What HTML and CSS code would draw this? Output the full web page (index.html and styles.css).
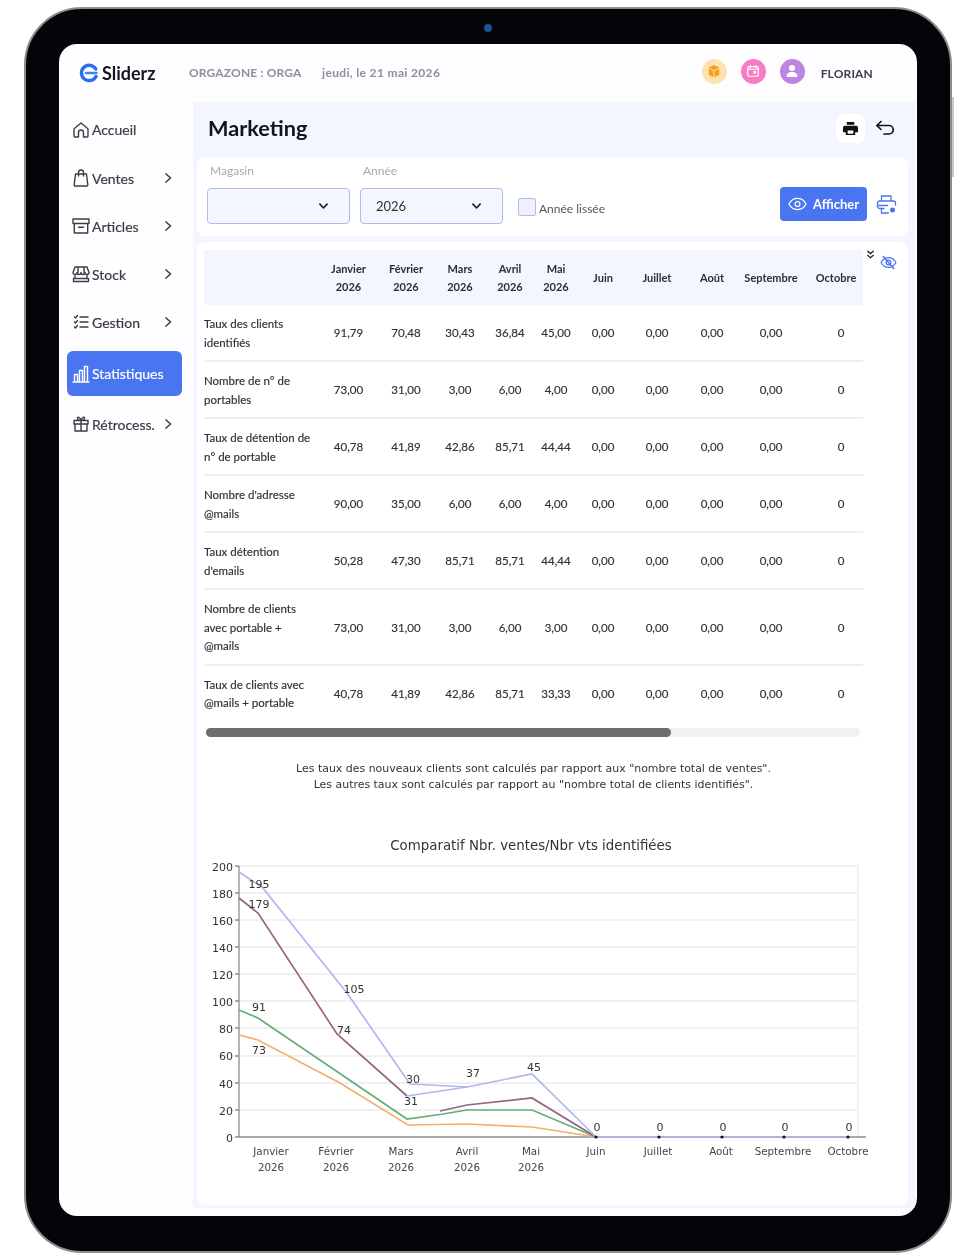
FILE: index.html
```html
<!DOCTYPE html>
<html lang="fr">
<head>
<meta charset="utf-8">
<title>Sliderz - Marketing</title>
<link rel="stylesheet" href="styles.css">
</head>
<body>
<div class="tablet">
  <span class="camera"></span>
  <div class="screen">
    <header class="topbar">
      <div class="brand">
        <svg class="logo" viewBox="0 0 20 20" width="20" height="20"><path d="M16.800 6A7.700 7.700 0 1 0 17 13.500" fill="none" stroke="#2a6df0" stroke-width="3.400" stroke-linecap="round"/><path d="M7 10h10.500" stroke="#2a8cf0" stroke-width="2.400" stroke-linecap="round"/></svg>
        <span class="brand-name">Sliderz</span>
      </div>
      <span class="org">ORGAZONE : ORGA</span>
      <span class="date">jeudi, le 21 mai 2026</span>
      <div class="top-icons">
        <span class="round round-orange"><svg viewBox="0 0 16 16" width="14" height="14"><path d="M8 1l6 3-6 3-6-3zM2 5.200l5.400 2.700V15L2 12.200zM14 5.200L8.600 7.900V15l5.400-2.800z" fill="#f5a016"/></svg></span>
        <span class="round round-pink"><svg viewBox="0 0 16 16" width="14" height="14"><rect x="2" y="3" width="12" height="11" rx="1.500" fill="none" stroke="#fff" stroke-width="1.400"/><path d="M2 6h12M5 1.500v3M11 1.500v3" stroke="#fff" stroke-width="1.400"/><rect x="8.500" y="8" width="3" height="3" fill="#fff"/></svg></span>
        <span class="round round-purple"><svg viewBox="0 0 16 16" width="16" height="16"><circle cx="8" cy="5" r="3" fill="#fff"/><path d="M2.500 14c0-3.400 2.200-5 5.500-5s5.500 1.600 5.500 5z" fill="#fff"/></svg></span>
        <span class="user">FLORIAN</span>
      </div>
    </header>
    <div class="body">
      <nav class="sidebar">
        <a class="nav-item nav-first"><svg class="nav-icon" viewBox="0 0 18 18"><path d="M9 2 2.600 7.300a1.500 1.500 0 0 0-.6 1.200V15a1 1 0 0 0 1 1h3.500v-4.500a2.500 2.500 0 0 1 5 0V16H15a1 1 0 0 0 1-1V8.500a1.500 1.500 0 0 0-.6-1.200z"/></svg><span class="nav-label">Accueil</span></a>
        <a class="nav-item"><svg class="nav-icon" viewBox="0 0 18 18"><path d="M3.500 5h11l1.300 11a1 1 0 0 1-1 1H3.200a1 1 0 0 1-1-1zM6.500 7V3.500a2.500 2.500 0 0 1 5 0V7"/></svg><span class="nav-label">Ventes</span><svg class="chev" viewBox="0 0 8 12"><path d="M1.500 1.500 6.500 6l-5 4.500"/></svg></a>
        <a class="nav-item"><svg class="nav-icon" viewBox="0 0 18 18"><path d="M1 2h16v4.500H1zM2.300 6.500V16h13.400V6.500M6.500 10.300h5"/></svg><span class="nav-label">Articles</span><svg class="chev" viewBox="0 0 8 12"><path d="M1.500 1.500 6.500 6l-5 4.500"/></svg></a>
        <a class="nav-item"><svg class="nav-icon" viewBox="0 0 18 18"><path d="M3 2h12l2 5.500a2 2 0 0 1-4 0 2 2 0 0 1-4 0 2 2 0 0 1-4 0 2 2 0 0 1-4 0zM3 9.500v4h12v-4M1.500 13.500h15v3h-15zM6 2.500v5M12 2.500v5"/></svg><span class="nav-label">Stock</span><svg class="chev" viewBox="0 0 8 12"><path d="M1.500 1.500 6.500 6l-5 4.500"/></svg></a>
        <a class="nav-item"><svg class="nav-icon" viewBox="0 0 18 18"><path d="M8 4h8M8 9h8M8 14h8M2.500 4l1 1 2-2.500M2.500 9l1 1 2-2.500M2.500 14l1 1 2-2.500"/></svg><span class="nav-label">Gestion</span><svg class="chev" viewBox="0 0 8 12"><path d="M1.500 1.500 6.500 6l-5 4.500"/></svg></a>
        <a class="nav-item nav-active"><svg class="nav-icon" viewBox="0 0 18 18"><path d="M1 17h16M2.500 16.500V9.500h3v7M7.500 16.500V5.500h3v11M12.500 16.500V1.500h3v15"/></svg><span class="nav-label">Statistiques</span></a>
        <a class="nav-item"><svg class="nav-icon" viewBox="0 0 18 18"><path d="M2 5.500h14v3.500H2zM3 9v7h12V9M9 5.500V16M9 5.500C7 5.500 5.500 4.500 5.500 3.200S8 1.500 9 5.500c1-4 3.500-3.600 3.500-2.300S11 5.500 9 5.500"/></svg><span class="nav-label">Rétrocess.</span><svg class="chev" viewBox="0 0 8 12"><path d="M1.500 1.500 6.500 6l-5 4.500"/></svg></a>
      </nav>
      <main class="main">
        <div class="title-bar">
          <h1 class="title">Marketing</h1>
          <span class="print-btn"><svg viewBox="0 0 18 18" width="17" height="17"><path d="M5 2h8v3H5zM3 6h12a2 2 0 0 1 2 2v5h-3v3H4v-3H1V8a2 2 0 0 1 2-2zM6 11v3.500h6V11z" fill="#111" fill-rule="evenodd"/></svg></span>
          <svg class="back" viewBox="0 0 20 18" width="20" height="18"><path d="M6 2.500 1.800 6.500 6 10.500M2 6.500h12a4 4 0 0 1 0 8.500H9" fill="none" stroke="#111" stroke-width="1.700" stroke-linecap="round" stroke-linejoin="round"/></svg>
        </div>
        <section class="filters">
          <div class="field field-store">
            <label class="field-label">Magasin</label>
            <div class="select"><span class="select-value"></span><svg class="select-chev" viewBox="0 0 12 8" width="11" height="8"><path d="M1.500 1.500 6 6l4.500-4.500" fill="none" stroke="#222" stroke-width="1.800"/></svg></div>
          </div>
          <div class="field">
            <label class="field-label">Année</label>
            <div class="select"><span class="select-value">2026</span><svg class="select-chev" viewBox="0 0 12 8" width="11" height="8"><path d="M1.500 1.500 6 6l4.500-4.500" fill="none" stroke="#222" stroke-width="1.800"/></svg></div>
          </div>
          <div class="smooth"><span class="checkbox"></span><span class="smooth-label">Année lissée</span></div>
          <button class="show-btn"><svg viewBox="0 0 20 14" width="19" height="14"><path d="M1 7c2-3.800 5-5.800 9-5.800S17 3.200 19 7c-2 3.800-5 5.800-9 5.800S3 10.800 1 7z" fill="none" stroke="#fff" stroke-width="1.300"/><circle cx="10" cy="7" r="2.600" fill="none" stroke="#fff" stroke-width="1.300"/></svg><span>Afficher</span></button>
          <svg class="print-cfg" viewBox="0 0 21 21" width="21" height="21"><path d="M5.500 7V2h9.500v5M8 14.500H3.500a2 2 0 0 1-2-2V9a2 2 0 0 1 2-2h14a2 2 0 0 1 2 2v2M5.500 14.500v4.500h7" fill="none" stroke="#4a75f0" stroke-width="1.300" stroke-linecap="round"/><path d="M2 11.500h10" stroke="#4a75f0" stroke-width="1.300"/><circle cx="16.500" cy="16" r="2.500" fill="#4a75f0"/></svg>
        </section>
        <section class="panel">
          <div class="table-row">
            <div class="table-wrap">
              <table class="stats">
                <colgroup>
                  <col class="c-label"><col class="c-jan"><col class="c-fev"><col class="c-mid"><col class="c-mid"><col class="c-mai"><col class="c-juin"><col class="c-juil"><col class="c-aout"><col class="c-sep"><col class="c-oct">
                </colgroup>
                <thead>
                  <tr><th></th><th>Janvier<br>2026</th><th>Février<br>2026</th><th>Mars<br>2026</th><th>Avril<br>2026</th><th>Mai<br>2026</th><th>Juin</th><th>Juillet</th><th>Août</th><th>Septembre</th><th class="last-head">Octobre</th></tr>
                </thead>
                <tbody>
                  <tr><td>Taux des clients identifiés</td><td>91,79</td><td>70,48</td><td>30,43</td><td>36,84</td><td>45,00</td><td>0,00</td><td>0,00</td><td>0,00</td><td>0,00</td><td class="last">0</td></tr>
                  <tr><td>Nombre de n° de portables</td><td>73,00</td><td>31,00</td><td>3,00</td><td>6,00</td><td>4,00</td><td>0,00</td><td>0,00</td><td>0,00</td><td>0,00</td><td class="last">0</td></tr>
                  <tr><td>Taux de détention de n° de portable</td><td>40,78</td><td>41,89</td><td>42,86</td><td>85,71</td><td>44,44</td><td>0,00</td><td>0,00</td><td>0,00</td><td>0,00</td><td class="last">0</td></tr>
                  <tr><td>Nombre d'adresse @mails</td><td>90,00</td><td>35,00</td><td>6,00</td><td>6,00</td><td>4,00</td><td>0,00</td><td>0,00</td><td>0,00</td><td>0,00</td><td class="last">0</td></tr>
                  <tr><td>Taux détention d'emails</td><td>50,28</td><td>47,30</td><td>85,71</td><td>85,71</td><td>44,44</td><td>0,00</td><td>0,00</td><td>0,00</td><td>0,00</td><td class="last">0</td></tr>
                  <tr><td>Nombre de clients avec portable + @mails</td><td>73,00</td><td>31,00</td><td>3,00</td><td>6,00</td><td>3,00</td><td>0,00</td><td>0,00</td><td>0,00</td><td>0,00</td><td class="last">0</td></tr>
                  <tr><td>Taux de clients avec @mails + portable</td><td>40,78</td><td>41,89</td><td>42,86</td><td>85,71</td><td>33,33</td><td>0,00</td><td>0,00</td><td>0,00</td><td>0,00</td><td class="last">0</td></tr>
                </tbody>
              </table>
              <div class="scroll-track"><div class="scroll-thumb"></div></div>
            </div>
            <div class="table-tools">
              <svg viewBox="0 0 10 10" width="9" height="9"><path d="M1.500 1 5 4l3.500-3M1.500 5.500 5 8.500l3.500-3" fill="none" stroke="#222" stroke-width="1.400"/></svg>
              <svg class="eye-off" viewBox="0 0 18 16" width="17" height="15"><path d="M1 8c2-3.500 4.700-5.300 8-5.300s6 1.800 8 5.300c-2 3.500-4.700 5.300-8 5.300S3 11.500 1 8z" fill="none" stroke="#4a75f0" stroke-width="1.300"/><circle cx="9" cy="8" r="2.500" fill="none" stroke="#4a75f0" stroke-width="1.300"/><path d="M3 1l12 14" stroke="#4a75f0" stroke-width="1.500"/></svg>
            </div>
          </div>
          <p class="note">Les taux des nouveaux clients sont calculés par rapport aux "nombre total de ventes".<br>Les autres taux sont calculés par rapport au "nombre total de clients identifiés".</p>
          <svg class="chart" viewBox="204 832 690 345" width="690" height="345">
            <text class="chart-title" x="531" y="850">Comparatif Nbr. ventes/Nbr vts identifiées</text>
            <g class="grid">
              <path d="M239 866H858M239 893H858M239 920H858M239 947H858M239 974H858M239 1001H858M239 1028H858M239 1056H858M239 1083H858M239 1110H858M858 866V1137"/>
            </g>
            <path class="axis" d="M235 866H239M235 893H239M235 920H239M235 947H239M235 974H239M235 1001H239M235 1028H239M235 1056H239M235 1083H239M235 1110H239M235 1137H239M239 866V1137M239 1137H866"/>
            <g class="ylab">
              <text x="233" y="871">200</text><text x="233" y="898">180</text><text x="233" y="925">160</text><text x="233" y="952">140</text><text x="233" y="979">120</text><text x="233" y="1006">100</text><text x="233" y="1033">80</text><text x="233" y="1060">60</text><text x="233" y="1088">40</text><text x="233" y="1115">20</text><text x="233" y="1142">0</text>
            </g>
            <polyline class="s-orange" points="239,1035 258,1040 340,1083 408,1125 467,1124 532,1127 596,1137"/>
            <polyline class="s-green" points="239,1010 258,1018 407,1119 443,1114 467,1110 532,1110 596,1137"/>
            <polyline class="s-brown" points="239,898 258,913 337,1034 407,1096"/>
            <polyline class="s-brown" points="440,1111 467,1105 532,1098 596,1137"/>
            <polyline class="s-blue" points="239,872 262,887 347,993 410,1084 430,1085 467,1087"/>
            <polyline class="s-blue" points="407,1096 467,1087 532,1074 596,1137 848,1137"/>
            <g class="dots"><circle cx="596" cy="1137" r="1.600"/><circle cx="659" cy="1137" r="1.600"/><circle cx="722" cy="1137" r="1.600"/><circle cx="784" cy="1137" r="1.600"/><circle cx="848" cy="1137" r="1.600"/></g>
            <g class="vals">
              <text x="259" y="888">195</text><text x="259" y="908">179</text><text x="259" y="1011">91</text><text x="259" y="1054">73</text><text x="354" y="993">105</text><text x="344" y="1034">74</text><text x="413" y="1083">30</text><text x="411" y="1105">31</text><text x="473" y="1077">37</text><text x="534" y="1071">45</text><text x="597" y="1131">0</text><text x="660" y="1131">0</text><text x="723" y="1131">0</text><text x="785" y="1131">0</text><text x="849" y="1131">0</text>
            </g>
            <g class="xlab">
              <text x="271" y="1155">Janvier</text><text x="271" y="1171">2026</text>
              <text x="336" y="1155">Février</text><text x="336" y="1171">2026</text>
              <text x="401" y="1155">Mars</text><text x="401" y="1171">2026</text>
              <text x="467" y="1155">Avril</text><text x="467" y="1171">2026</text>
              <text x="531" y="1155">Mai</text><text x="531" y="1171">2026</text>
              <text x="596" y="1155">Juin</text><text x="658" y="1155">Juillet</text><text x="721" y="1155">Août</text><text x="783" y="1155">Septembre</text><text x="848" y="1155">Octobre</text>
            </g>
          </svg>
        </section>
      </main>
    </div>
  </div>
</div>
</body>
</html>
```

FILE: styles.css
```css
* { box-sizing: border-box; }
html, body { margin: 0; padding: 0; background: #fff; }
body { font-family: "Lato", "Noto Sans", sans-serif; color: #333; width: 976px; height: 1258px; overflow: hidden; }

.tablet {
  position: relative;
  width: 928px;
  height: 1246px;
  margin: 7px 0 0 24px;
  padding: 35px 33px;
  background: #050408;
  border: 2px solid #8d8d90;
  border-radius: 58px;
  filter: blur(0.4px);
}
.tablet::after {
  content: "";
  position: absolute;
  right: -4px;
  top: 88px;
  width: 2px;
  height: 80px;
  background: #c8c8cc;
}
.camera {
  position: absolute;
  left: 458px;
  top: 15px;
  width: 8px;
  height: 8px;
  border-radius: 50%;
  background: #1d4f96;
}
.screen {
  width: 858px;
  height: 1172px;
  background: #fefdff;
  border-radius: 18px;
  overflow: hidden;
  display: flex;
  flex-direction: column;
}

.topbar { height: 58px; display: flex; align-items: center; padding: 0 44px 0 20px; flex: none; }
.brand { display: flex; align-items: center; gap: 3px; width: 110px; }
.logo { flex: none; }
.brand-name { font-size: 18px; font-weight: 700; color: #15171c; }
.org { font-size: 12px; font-weight: 700; color: #8c8f96; width: 133px; letter-spacing: .15px; margin-top: -2px; }
.date { font-size: 12px; font-weight: 700; color: #8c8f96; letter-spacing: .35px; margin-top: -2px; }
.top-icons { margin-left: auto; display: flex; align-items: center; gap: 14px; }
.round { width: 25px; height: 25px; border-radius: 50%; display: flex; align-items: center; justify-content: center; margin-top: -4px; }
.round-orange { background: #fde2b2; }
.round-pink { background: #f77cc4; }
.round-purple { background: #bd84e4; }
.user { font-size: 12px; font-weight: 700; color: #3c3f45; margin-left: 2px; letter-spacing: .15px; }

.body { flex: 1; display: flex; min-height: 0; }
.sidebar { width: 134px; flex: none; padding: 4px 11px 0 8px; display: flex; flex-direction: column; }
.nav-item { height: 48px; display: flex; align-items: center; padding-left: 5px; color: #3a3d42; font-size: 14px; border-radius: 6px; flex: none; -webkit-text-stroke: .2px currentColor; }
.nav-first { height: 47px; margin-bottom: 1px; }
.nav-icon { width: 18px; height: 18px; flex: none; fill: none; stroke: currentColor; stroke-width: 1.400; stroke-linecap: round; stroke-linejoin: round; margin-right: 2px; }
.nav-label { white-space: nowrap; }
.chev { margin-left: auto; margin-right: 10px; width: 8px; height: 12px; flex: none; fill: none; stroke: #3a3d42; stroke-width: 1.500; }
.nav-active { height: 45px; margin: 5px 0 4px; background: #4a75f0; color: #fff; }

.main { flex: 1; background: #f3f6fe; margin: 0 2px 8px 0; padding: 0 7px 3px 4px; display: flex; flex-direction: column; min-width: 0; }
.title-bar { height: 55px; flex: none; display: flex; align-items: center; padding: 0 13px 4px 11px; }
.title { margin: 0; font-size: 21.700px; font-weight: 700; color: #111318; }
.print-btn { margin-left: auto; width: 29px; height: 29px; background: #fff; border-radius: 8px; display: flex; align-items: center; justify-content: center; margin-top: 1px; }
.back { margin-left: 10px; }

.filters { height: 79px; flex: none; background: #fff; border-radius: 8px; display: flex; align-items: flex-end; padding: 0 11px 12px 10px; }
.field { display: flex; flex-direction: column; width: 143px; margin-right: 10px; }
.field-store { margin-right: 10px; }
.field-label { font-size: 12px; line-height: 16px; color: #a5a8b0; margin: 0 0 9px 3px; }
.select { height: 36px; background: #f3f6fe; border: 1.500px solid #aebcee; border-radius: 4px; display: flex; align-items: center; justify-content: space-between; padding: 0 20px 0 15px; font-size: 13px; color: #333; }
.smooth { display: flex; align-items: center; gap: 3px; margin: 0 0 8px 5px; }
.checkbox { width: 18px; height: 18px; border: 1.500px solid #aebcee; border-radius: 2px; background: #eef1fc; }
.smooth-label { font-size: 12px; color: #555; margin-top: 2px; }
.show-btn { margin: 0 0 3px auto; width: 87px; height: 34px; background: #4a75f0; border: 0; border-radius: 4px; color: #fff; font-family: inherit; font-size: 13px; font-weight: 700; display: flex; align-items: center; justify-content: center; gap: 6px; padding: 0; }
.print-cfg { margin: 0 0 9px 9px; flex: none; }

.panel { flex: 1; margin-top: 6px; background: #fff; border-radius: 8px; padding: 8px 0 0 7px; display: flex; flex-direction: column; min-height: 0; }
.table-row { display: flex; align-items: flex-start; }
.table-wrap { width: 659px; flex: none; }
.table-tools { display: flex; align-items: flex-start; gap: 5px; padding-left: 3px; }
.eye-off { margin-top: 5px; }
.stats { width: 659px; table-layout: fixed; border-collapse: collapse; font-size: 11.500px; color: #2f3136; -webkit-text-stroke: .15px currentColor; }
.c-label { width: 116px; }
.c-jan { width: 57px; }
.c-fev { width: 58px; }
.c-mid { width: 50px; }
.c-mai { width: 42px; }
.c-juin { width: 52px; }
.c-juil { width: 56px; }
.c-aout { width: 54px; }
.c-sep { width: 64px; }
.c-oct { width: 60px; }
.stats th { height: 55px; background: #f3f6fe; font-size: 11px; font-weight: 700; line-height: 18px; text-align: center; color: #2c2f34; padding: 0; white-space: nowrap; -webkit-text-stroke: 0; }
.stats td { padding: 10px 0 8px; line-height: 18.500px; text-align: center; border-bottom: 2px solid #eeeff3; }
.stats td:first-child { text-align: left; padding-right: 4px; }
.stats tbody tr:last-child td { border-bottom-color: transparent; }
.stats .last { padding-left: 16px; }
.stats .last-head { padding-left: 6px; }
.scroll-track { height: 9px; margin: 5px 3px 0 2px; background: #f0f1f4; border-radius: 5px; }
.scroll-thumb { width: 465px; height: 100%; background: #6d6d70; border-radius: 5px; }
.note { margin: 24px 0 0; width: 659px; text-align: center; font-family: "DejaVu Sans", sans-serif; font-size: 10.950px; line-height: 16px; color: #333; }
.chart { display: block; margin-top: 39px; flex: none; }
.chart text { font-family: "DejaVu Sans", sans-serif; }
.chart-title { font-size: 13.350px; fill: #333; text-anchor: middle; }
.grid path { stroke: #ececf0; stroke-width: 1.300; fill: none; }
.axis { stroke: #8d8d90; stroke-width: 1.300; fill: none; }
.ylab text { font-size: 11px; fill: #333; text-anchor: end; }
.vals text { font-size: 11px; fill: #333; text-anchor: middle; }
.xlab text { font-size: 10.300px; fill: #444; text-anchor: middle; }
.s-orange, .s-green, .s-brown, .s-blue { fill: none; stroke-width: 1.700; }
.s-orange { stroke: #f2b06a; }
.s-green { stroke: #62b077; }
.s-brown { stroke: #95677f; }
.s-blue { stroke: #aeb7f0; }
.dots circle { fill: #0e1030; }
```
